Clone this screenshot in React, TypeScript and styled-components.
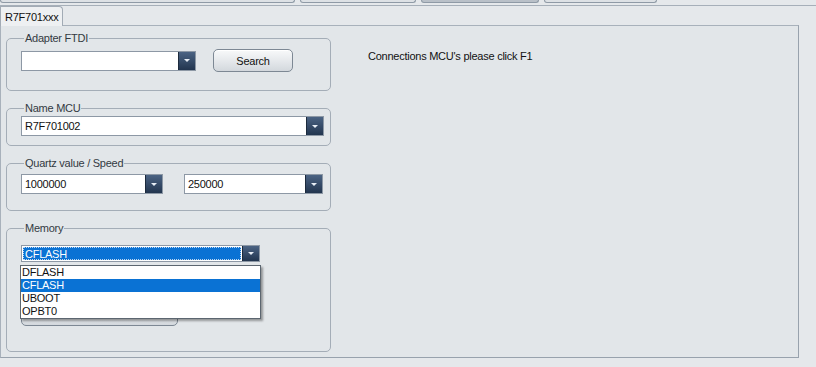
import React from 'react';
import styled, { createGlobalStyle } from 'styled-components';

const GlobalStyle = createGlobalStyle`
  html, body {
    margin: 0;
    padding: 0;
    background: #e5e8eb;
    font-family: "Liberation Sans", Arial, sans-serif;
    font-size: 11px;
    color: #111;
  }
`;

const Window = styled.div`
  width: 816px;
  height: 367px;
  overflow: hidden;
  background: #e5e8eb;
  font-family: "Liberation Sans", Arial, sans-serif;
  font-size: 11px;
  letter-spacing: -0.25px;
`;

const TopStrip = styled.div`
  height: 5px;
  border-bottom: 1px solid #a6afb9;
  display: flex;
  gap: 5px;
  align-items: flex-start;
`;

const TabStub = styled.div<{ $w: number; $dark?: boolean }>`
  width: ${p => p.$w}px;
  height: 2px;
  background: ${p => (p.$dark ? '#b9c0c8' : '#dde1e5')};
  border: 1px solid #8f9aa6;
  border-top: none;
  border-radius: 0 0 4px 4px;
`;

const TabRow = styled.div`
  display: flex;
  height: 20px;
`;

const Tab = styled.div`
  width: 63px;
  height: 20px;
  box-sizing: border-box;
  background: #eef0f2;
  border: 1px solid #a2abb5;
  border-bottom: none;
  border-radius: 0 4px 0 0;
  padding: 4px 0 0 4px;
  color: #111;
  position: relative;
  z-index: 1;
`;

const Panel = styled.div`
  width: 799px;
  height: 333px;
  box-sizing: border-box;
  background: #e2e6e9;
  border: 1px solid #a8b1bb;
  border-right-color: #98a2ad;
  border-bottom-color: #98a2ad;
  margin-top: -1px;
  display: flex;
  padding: 5px 0 0 5px;
  gap: 37px;
`;

const LeftColumn = styled.div`
  width: 325px;
  display: flex;
  flex-direction: column;
  gap: 10px;
`;

const Group = styled.fieldset<{ $pt: number; $pb: number }>`
  margin: 0;
  border: 1px solid #a4adb7;
  border-radius: 5px;
  padding: ${p => p.$pt}px 7px ${p => p.$pb}px 14px;
  min-inline-size: 0;
  position: relative;
`;

const Legend = styled.legend`
  padding: 0 1px;
  margin-left: 3px;
  line-height: 14px;
  color: #333a42;
`;

const Row = styled.div<{ $w?: number }>`
  width: ${p => (p.$w ? `${p.$w}px` : 'auto')};
  display: flex;
  align-items: center;
  justify-content: space-between;
`;

const Combo = styled.div<{ $w: number; $h?: number }>`
  width: ${p => p.$w}px;
  height: ${p => p.$h ?? 20}px;
  box-sizing: border-box;
  background: #fff;
  border: 1px solid #8d98a5;
  display: flex;
  align-items: stretch;
`;

const ComboText = styled.div<{ $active?: boolean }>`
  flex: 1;
  display: flex;
  align-items: center;
  padding-left: ${p => (p.$active ? '2px' : '3px')};
  color: ${p => (p.$active ? '#fff' : '#111')};
  background: ${p => (p.$active ? '#0a72d4' : 'transparent')};
  outline: ${p => (p.$active ? '1px dotted #bcd7f2' : 'none')};
  outline-offset: -1px;
  margin: ${p => (p.$active ? '1px' : '0')};
`;

const ArrowBox = styled.div`
  width: 16px;
  background: linear-gradient(#4b6383, #22354f);
  border-left: 1px solid #1c2a3c;
  display: flex;
  align-items: center;
  justify-content: center;
`;

const Triangle = styled.div`
  width: 0;
  height: 0;
  border-left: 3px solid transparent;
  border-right: 3px solid transparent;
  border-top: 3px solid #e8eef5;
`;

const Button = styled.button<{ $w: number; $mt?: number }>`
  width: ${p => p.$w}px;
  height: 23px;
  margin-top: ${p => p.$mt ?? 0}px;
  border: 1px solid #7d8894;
  border-radius: 5px;
  background: linear-gradient(#f8f9fa, #e6e9ec 50%, #d3d8dd);
  box-shadow: inset 0 1px 0 #fff;
  font-family: "Liberation Sans", Arial, sans-serif;
  font-size: 11px;
  letter-spacing: -0.25px;
  color: #111;
  padding: 0;
`;

const List = styled.div`
  position: absolute;
  left: 13px;
  top: 30px;
  width: 241px;
  box-sizing: border-box;
  background: #fff;
  border: 1px solid #5c6670;
  box-shadow: 2px 2px 2px rgba(0, 0, 0, 0.35);
  z-index: 2;
`;

const ListItem = styled.div<{ $selected?: boolean }>`
  height: 13px;
  line-height: 13px;
  padding-left: 1px;
  background: ${p => (p.$selected ? '#0a72d4' : 'transparent')};
  color: ${p => (p.$selected ? '#fff' : '#111')};
`;

const Message = styled.div`
  padding-top: 19px;
  color: #111;
`;

const Arrow = () => (
  <ArrowBox>
    <Triangle />
  </ArrowBox>
);

const App: React.FC = () => {
  const memory = ['DFLASH', 'CFLASH', 'UBOOT', 'OPBT0'];
  return (
    <Window>
      <GlobalStyle />
      <TopStrip>
        <TabStub $w={293} />
        <TabStub $w={114} />
        <TabStub $w={116} $dark />
        <TabStub $w={111} />
      </TopStrip>
      <TabRow>
        <Tab>R7F701xxx</Tab>
      </TabRow>
      <Panel>
        <LeftColumn>
          <Group $pt={4} $pb={18}>
            <Legend>Adapter FTDI</Legend>
            <Row $w={272}>
              <Combo $w={175}>
                <ComboText />
                <Arrow />
              </Combo>
              <Button $w={80}>Search</Button>
            </Row>
          </Group>
          <Group $pt={1} $pb={9}>
            <Legend>Name MCU</Legend>
            <Combo $w={303}>
              <ComboText>R7F701002</ComboText>
              <Arrow />
            </Combo>
          </Group>
          <Group $pt={4} $pb={16}>
            <Legend>Quartz value / Speed</Legend>
            <Row>
              <Combo $w={142}>
                <ComboText>1000000</ComboText>
                <Arrow />
              </Combo>
              <Combo $w={139}>
                <ComboText>250000</ComboText>
                <Arrow />
              </Combo>
            </Row>
          </Group>
          <Group $pt={10} $pb={24}>
            <Legend>Memory</Legend>
            <Combo $w={239} $h={17}>
              <ComboText $active>CFLASH</ComboText>
              <Arrow />
            </Combo>
            <Button $w={157} $mt={41} />
            <List>
              {memory.map(m => (
                <ListItem key={m} $selected={m === 'CFLASH'}>
                  {m}
                </ListItem>
              ))}
            </List>
          </Group>
        </LeftColumn>
        <Message>Connections MCU's please click F1</Message>
      </Panel>
    </Window>
  );
};

export default App;
